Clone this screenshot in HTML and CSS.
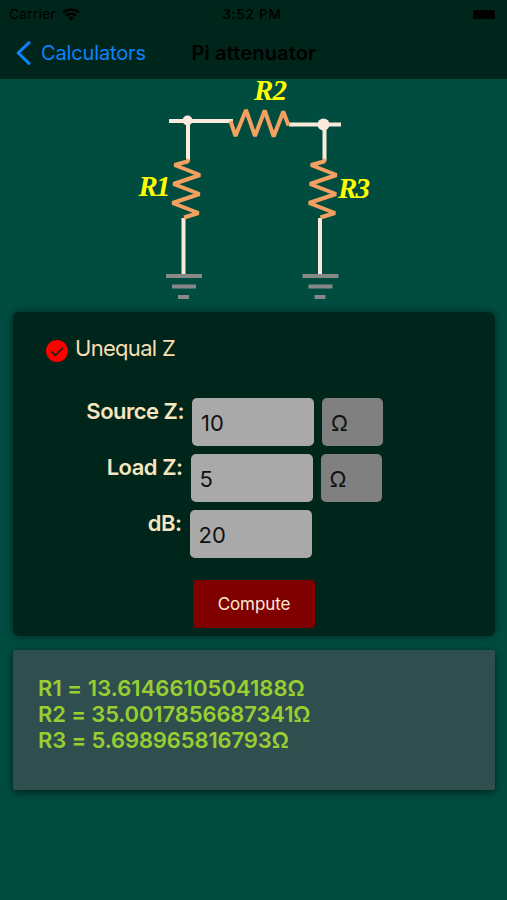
FILE: index.html
```
<!DOCTYPE html>
<html lang="en">
<head>
  <meta charset="utf-8">
  <title>Pi attenuator</title>
  <link rel="stylesheet" href="styles.css">
</head>
<body>
  <header>
    <div class="status-bar">
      <div class="carrier">
        <span>Carrier</span>
        <svg width="18" height="13" viewBox="0 0 18 13">
          <path d="M1 4.7C5.5.6 12.5.6 17 4.7M3.9 7.7c2.9-2.6 7.3-2.6 10.2 0" fill="none" stroke="#000" stroke-width="2.3"/>
          <path d="M6 9.7q3-2.5 6 0L9 12.8z"/>
        </svg>
      </div>
      <span class="time">3:52 PM</span>
      <div class="battery"></div>
    </div>
    <nav class="nav-bar">
      <a class="back" href="#">
        <svg width="15" height="24" viewBox="0 0 15 24">
          <path d="M13 1.7L2.2 12 13 22.3" fill="none" stroke="#0a84ff" stroke-width="3" stroke-linecap="round" stroke-linejoin="round"/>
        </svg>
        <span>Calculators</span>
      </a>
      <h1>Pi attenuator</h1>
    </nav>
  </header>

  <svg class="circuit" width="507" height="233" viewBox="0 79 507 233">
    <g class="wire">
      <path d="M169 121h64M289 124.500h52M188 121v39M324.500 124v36M183.500 218v57M320 218v57"/>
    </g>
    <circle class="node" cx="187.500" cy="120.500" r="5"/>
    <circle class="node" cx="323.500" cy="124.500" r="6"/>
    <g class="resistor">
      <path d="M230.500 121l5 15 10.500-26 9 26 9.700-25.500 9 26 9.600-25 5.200 14"/>
      <path d="M188.500 159l-1 2.500-13 3.500 25.500 10-26.500 9 26 10-27 9 26 10-14.500 4.500"/>
      <path d="M325 159l-1 2.500-13 3.500 25.500 10-26.500 9 26 10-27 9 26 10-14.500 4.500"/>
    </g>
    <g class="ground">
      <path d="M166 276h36M172 286.500h24M178 297h11M302.500 276h36M308.500 286.500h24M314.500 297h11"/>
    </g>
    <g class="names">
      <text x="254" y="99.500" textLength="33">R2</text>
      <text x="138.500" y="196" textLength="32">R1</text>
      <text x="338" y="198" textLength="32">R3</text>
    </g>
  </svg>

  <form class="card">
    <div class="option">
      <svg width="22" height="22" viewBox="0 0 22 22">
        <circle cx="11" cy="11" r="11" fill="#f00"/>
        <path d="M5.500 11.500l3.700 3.900 7.800-7.700" fill="none" stroke="#00251a" stroke-width="1.500"/>
      </svg>
      <span>Unequal Z</span>
    </div>
    <div class="row source">
      <label for="source">Source Z:</label>
      <input type="text" id="source" value="10">
      <div class="unit">Ω</div>
    </div>
    <div class="row load">
      <label for="load">Load Z:</label>
      <input type="text" id="load" value="5">
      <div class="unit">Ω</div>
    </div>
    <div class="row db">
      <label for="db">dB:</label>
      <input type="text" id="db" value="20">
    </div>
    <button type="button">Compute</button>
  </form>

  <div class="results">
    <p class="r1">R1 = 13.6146610504188Ω</p>
    <p>R2 = 35.0017856687341Ω</p>
    <p>R3 = 5.698965816793Ω</p>
  </div>
</body>
</html>
```
FILE: styles.css
```
* {
  margin: 0;
  padding: 0;
  box-sizing: border-box;
}

body {
  font-family: Inter, "Liberation Sans", sans-serif;
  background-color: #004d40;
  height: 900px;
  overflow: hidden;
}

header {
  height: 79px;
  background-color: #00251a;
  color: #000;
}

.status-bar {
  display: grid;
  grid-template-columns: 1fr auto 1fr;
  align-items: center;
  height: 28px;
  padding: 0 12px 0 9px;
  font-size: 13.5px;
}

.carrier {
  display: flex;
  align-items: center;
  gap: 6px;
  letter-spacing: 0.4px;
}

.time {
  font-weight: 500;
  letter-spacing: 0.8px;
}

.battery {
  justify-self: end;
  width: 22px;
  height: 9px;
  border-radius: 2px;
  background-color: #000;
}

.nav-bar {
  display: flex;
  align-items: center;
  height: 49px;
  padding-left: 16px;
}

.back {
  display: flex;
  align-items: center;
  gap: 10px;
  width: 175.5px;
  color: #0a84ff;
  font-size: 20px;
  letter-spacing: -0.15px;
  text-decoration: none;
}

h1 {
  font-size: 20px;
  font-weight: 600;
  letter-spacing: 0.15px;
}

.circuit {
  display: block;
  overflow: visible;
}

.wire {
  fill: none;
  stroke: #faebdc;
  stroke-width: 4;
}

.node {
  fill: #faebdc;
}

.resistor {
  fill: none;
  stroke: #f4a060;
  stroke-width: 4;
  stroke-linejoin: bevel;
}

.ground {
  stroke: #888;
  stroke-width: 4;
}

.names {
  fill: #ff0;
  font-family: "Liberation Serif", serif;
  font-size: 29px;
  font-style: italic;
  font-weight: bold;
}

.card {
  height: 324px;
  margin: 0 12px 0 13px;
  padding-top: 22px;
  border-radius: 6px;
  background-color: #00251a;
  box-shadow: 0 0 10px rgba(0, 0, 0, 0.5);
  color: #faebd7;
  font-size: 22px;
}

.option {
  display: flex;
  align-items: center;
  gap: 7px;
  height: 28px;
  padding-left: 33px;
  color: #f5deb3;
  letter-spacing: -0.7px;
}

.option svg {
  margin-top: 6px;
}

.row {
  display: flex;
  gap: 8px;
  height: 48px;
  margin-bottom: 8px;
}

.row.source {
  margin-top: 36px;
}

.row label {
  width: 171px;
  line-height: 27px;
  font-weight: 600;
  letter-spacing: -0.5px;
  text-align: right;
  color: #f5e6c0;
}

.row.load label {
  width: 169.500px;
}

.row.db label {
  width: 168.500px;
}

.row input {
  width: 122px;
  padding: 2px 9px 0;
  border: none;
  border-radius: 5px;
  background-color: #a9a9a9;
  color: #111;
  font: inherit;
}

.unit {
  width: 61px;
  padding-left: 9px;
  border-radius: 5px;
  background-color: #808080;
  color: #111;
  line-height: 50px;
}

button {
  display: block;
  width: 122px;
  height: 48px;
  margin: 22px 0 0 180px;
  border: none;
  border-radius: 4px;
  background-color: #800000;
  color: #faebd7;
  font-family: inherit;
  font-size: 17px;
  letter-spacing: -0.1px;
}

.results {
  height: 140px;
  margin: 14px 12px 0 13px;
  padding: 25px;
  border-radius: 2px;
  background-color: #2f4f4f;
  box-shadow: 0 2px 8px rgba(0, 0, 0, 0.6);
  color: #9acd32;
  font-size: 22px;
  font-weight: 600;
  line-height: 26px;
  letter-spacing: -0.13px;
}

.results .r1 {
  letter-spacing: 0.05px;
}
```
